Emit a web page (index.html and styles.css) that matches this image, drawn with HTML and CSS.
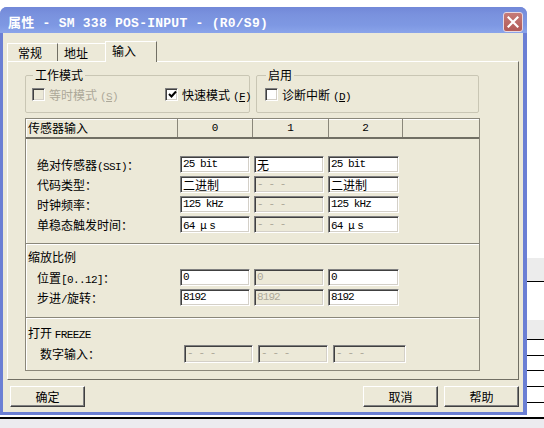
FILE: index.html
```html
<!DOCTYPE html>
<html>
<head>
<meta charset="utf-8">
<title>属性 - SM 338 POS-INPUT</title>
<link rel="stylesheet" href="styles.css">
</head>
<body>
<div class="desktop">
  <div class="win">
    <div class="titlebar">
      <span class="title">属性 - SM 338 POS-INPUT - (R0/S9)</span>
      <span class="close"><svg width="12" height="12" viewBox="0 0 12 12"><path d="M1.5 1.5 L10.5 10.5 M10.5 1.5 L1.5 10.5" stroke="#fff" stroke-width="2.2" stroke-linecap="square"/></svg></span>
    </div>
    <div class="client">
      <div class="tabs">
        <div class="tab t1">常规</div>
        <div class="tab t2">地址</div>
        <div class="tab t3 active">输入</div>
      </div>
      <div class="panel">
        <div class="groups">
          <fieldset class="grp g1">
            <legend>工作模式</legend>
            <label class="chk disabled"><span class="box"></span><span>等时模式<span class="mn">(<u>S</u>)</span></span></label>
            <label class="chk"><span class="box"><svg width="9" height="9" viewBox="0 0 9 9"><path d="M1 4 L3.5 6.5 L8 1.5" fill="none" stroke="#000" stroke-width="2"/></svg></span><span>快速模式<span class="mn">(<u>F</u>)</span></span></label>
          </fieldset>
          <fieldset class="grp g2">
            <legend>启用</legend>
            <label class="chk"><span class="box"></span><span>诊断中断<span class="mn">(<u>D</u>)</span></span></label>
          </fieldset>
        </div>
        <div class="sensor">
          <div class="thead">
            <div class="th first">传感器输入</div>
            <div class="th">0</div>
            <div class="th">1</div>
            <div class="th">2</div>
            <div class="th last"></div>
          </div>
          <div class="sec s1">
            <div class="lbl">绝对传感器<span class="lat">(SSI)</span>：</div>
            <div class="inp mono">25 bit</div>
            <div class="inp">无</div>
            <div class="inp mono">25 bit</div>
            <div class="lbl">代码类型：</div>
            <div class="inp">二进制</div>
            <div class="inp off mono">- - -</div>
            <div class="inp">二进制</div>
            <div class="lbl">时钟频率：</div>
            <div class="inp mono">125 kHz</div>
            <div class="inp off mono">- - -</div>
            <div class="inp mono">125 kHz</div>
            <div class="lbl">单稳态触发时间：</div>
            <div class="inp mono">64 <span class="mu">μ</span>s</div>
            <div class="inp off mono">- - -</div>
            <div class="inp mono">64 <span class="mu">μ</span>s</div>
          </div>
          <div class="sec s2">
            <div class="cap">缩放比例</div>
            <div class="lbl">位置<span class="lat">[0..12]</span>：</div>
            <div class="inp mono">0</div>
            <div class="inp off mono">0</div>
            <div class="inp mono">0</div>
            <div class="lbl">步进<span class="lat">/</span>旋转：</div>
            <div class="inp mono">8192</div>
            <div class="inp off mono">8192</div>
            <div class="inp mono">8192</div>
          </div>
          <div class="sec s3">
            <div class="cap">打开 <span class="lat">FREEZE</span></div>
            <div class="lbl">数字输入：</div>
            <div class="inp off mono">- - -</div>
            <div class="inp off mono">- - -</div>
            <div class="inp off mono">- - -</div>
          </div>
        </div>
      </div>
      <div class="buttons">
        <div class="btn">确定</div>
        <div class="btn push">取消</div>
        <div class="btn">帮助</div>
      </div>
    </div>
  </div>
</div>
</body>
</html>
```

FILE: styles.css
```css
* { box-sizing: border-box; }
html, body { margin: 0; padding: 0; }
body {
  width: 544px;
  height: 428px;
  overflow: hidden;
  font-family: "Noto Sans CJK SC", sans-serif;
  font-size: 12px;
  color: #000;
}
.desktop {
  width: 544px;
  height: 428px;
  padding-top: 7px;
  background: linear-gradient(to bottom,
    #fff 0 258px, #ececec 258px 281px, #000 281px 282px,
    #fff 282px 320px, #ececec 320px 339px, #000 339px 340px,
    #fff 340px 355px, #000 355px 356px, #fff 356px 370px,
    #000 370px 371px, #fff 371px 386px, #000 386px 387px,
    #fff 387px 402px, #000 402px 403px, #fff 403px 417px,
    #000 417px 419px, #ecebef 419px);
}
.win {
  width: 527px;
  height: 408px;
  background: #6b7fd4;
  border-radius: 7px 7px 0 0;
  padding: 0 4px 3px 3px;
  display: flex;
  flex-direction: column;
}
.titlebar {
  height: 27px;
  margin: 0 -4px 0 -3px;
  border-radius: 7px 7px 0 0;
  background: linear-gradient(to bottom, #7288d8 0%, #7a92de 30%, #7e98e3 70%, #8aa4ea 100%);
  display: flex;
  align-items: flex-end;
  padding: 0 4px 1px 8px;
}
.title {
  flex: 1;
  align-self: center;
  padding-top: 3px;
  color: #fff;
  font-family: "Liberation Mono", "Noto Sans CJK SC", monospace;
  font-weight: bold;
  font-size: 13px;
  letter-spacing: 0.25px;
  white-space: pre;
}
.close {
  width: 20px;
  height: 20px;
  border: 1px solid #e8d8e0;
  border-radius: 3px;
  background: linear-gradient(to bottom, #c67b78, #b25b58);
  display: flex;
  align-items: center;
  justify-content: center;
}
.client {
  flex: 1;
  background: #ece9d8;
  padding: 8px 4px 5px 4px;
  display: flex;
  flex-direction: column;
}
.tabs {
  display: flex;
  height: 20px;
  align-items: flex-end;
  position: relative;
  z-index: 1;
}
.tab {
  height: 18px;
  line-height: 18px;
  border-top: 1px solid #fff;
  border-left: 1px solid #fff;
  border-right: 1px solid #716f64;
  white-space: nowrap;
}
.t1 { width: 51px; padding-left: 10px; }
.t2 { width: 48px; padding-left: 6px; border-left: 0; }
.t3.active {
  width: 52px;
  height: 21px;
  margin-left: -1px;
  margin-bottom: -1px;
  padding-left: 6px;
  line-height: 17px;
  background: #ece9d8;
}
.panel {
  height: 319px;
  border: 1px solid;
  border-color: #fff #716f64 #716f64 #fff;
  padding: 6px 0 0 17px;
}
.groups {
  display: flex;
  gap: 6px;
}
.grp {
  margin: 0;
  border: 1px solid #c9c6b4;
  border-radius: 2px;
  padding: 5px 6px 9px 6px;
  height: 45px;
  min-width: 0;
}
.grp legend {
  padding: 0 2px;
  margin-left: 1px;
  line-height: 14px;
  font-size: 12px;
}
.g1 { width: 225px; display: grid; grid-template-columns: 133px auto; }
.g2 { width: 223px; padding-left: 8px; }
.chk {
  display: flex;
  align-items: center;
  gap: 4px;
  height: 14px;
  white-space: nowrap;
}
.chk.disabled { color: #aca899; }
.box {
  width: 13px;
  height: 13px;
  background: #fff;
  border: 1px solid;
  border-color: #808080 #fff #fff #808080;
  box-shadow: inset 1px 1px #404040, inset -1px -1px #d4d0c8;
  display: flex;
  align-items: center;
  justify-content: center;
  padding-top: 1px;
  padding-left: 1px;
}
.chk.disabled .box { background: #ece9d8; }
.mn {
  font-family: "Liberation Mono", monospace;
  font-size: 11px;
  letter-spacing: -0.6px;
  margin-left: 3px;
}
.mn u { text-underline-offset: 1px; }
.sensor {
  margin-top: 5px;
  width: 455px;
  height: 253px;
  border: 1px solid #8a877a;
  box-shadow: inset 1px 1px #fff;
}
.thead {
  display: grid;
  grid-template-columns: 152px 75px 76px 74px 1fr;
  height: 20px;
  border-bottom: 2px solid #716f64;
}
.th {
  border-right: 1px solid #8a877a;
  line-height: 18px;
  text-align: center;
  font-family: "Liberation Mono", monospace;
  font-size: 11px;
}
.th.first {
  text-align: left;
  padding-left: 2px;
  font-family: "Noto Sans CJK SC", sans-serif;
  font-size: 12px;
}
.th.last { border-right: 0; }
.sec {
  display: grid;
  grid-template-columns: 150px 70px 70px 71px;
  column-gap: 4px;
  row-gap: 3px;
  grid-auto-rows: 17px;
  align-items: center;
}
.s1 {
  padding-top: 17px;
  padding-bottom: 10px;
  border-bottom: 1px solid #8a877a;
  box-shadow: 0 1px #fff;
}
.s2 {
  padding-top: 5px;
  padding-bottom: 11px;
  border-bottom: 1px solid #8a877a;
  box-shadow: 0 1px #fff;
}
.s3 {
  padding-top: 7px;
  grid-template-columns: 153px 69px 70px 73px;
  column-gap: 5px;
}
.cap {
  grid-column: 1 / -1;
  padding-left: 2px;
  height: 17px;
  line-height: 15px;
  align-self: start;
  margin-bottom: 2px;
}
.s3 .cap { margin-bottom: -3px; }
.lbl {
  padding-left: 11px;
  white-space: nowrap;
  min-width: 0;
}
.s3 .lbl { padding-left: 14px; }
.lat {
  font-family: "Liberation Mono", monospace;
  font-size: 11px;
  letter-spacing: -0.6px;
}
.inp {
  height: 17px;
  min-width: 0;
  background: #fff;
  border: 1px solid;
  border-color: #808080 #fff #fff #808080;
  box-shadow: inset 1px 1px #404040, inset -1px -1px #d4d0c8;
  padding-left: 2px;
  line-height: 15px;
  white-space: pre;
  overflow: hidden;
}
.mono {
  font-family: "Liberation Mono", monospace;
  font-size: 11px;
  letter-spacing: -0.9px;
}
.mu {
  font-family: "Noto Sans CJK SC", sans-serif;
  font-size: 11px;
  margin-right: 3px;
}
.inp.off {
  background: #ece9d8;
  color: #aca899;
}
.s3 .inp { height: 18px; }
.buttons {
  display: flex;
  gap: 6px;
  margin-top: 6px;
  padding: 0 0 0 3px;
}
.btn {
  width: 75px;
  height: 21px;
  text-align: center;
  line-height: 19px;
  background: #ece9d8;
  border: 1px solid;
  border-color: #fff #404040 #404040 #fff;
  box-shadow: inset -1px -1px #808080;
}
.btn.push { margin-left: auto; }
```
